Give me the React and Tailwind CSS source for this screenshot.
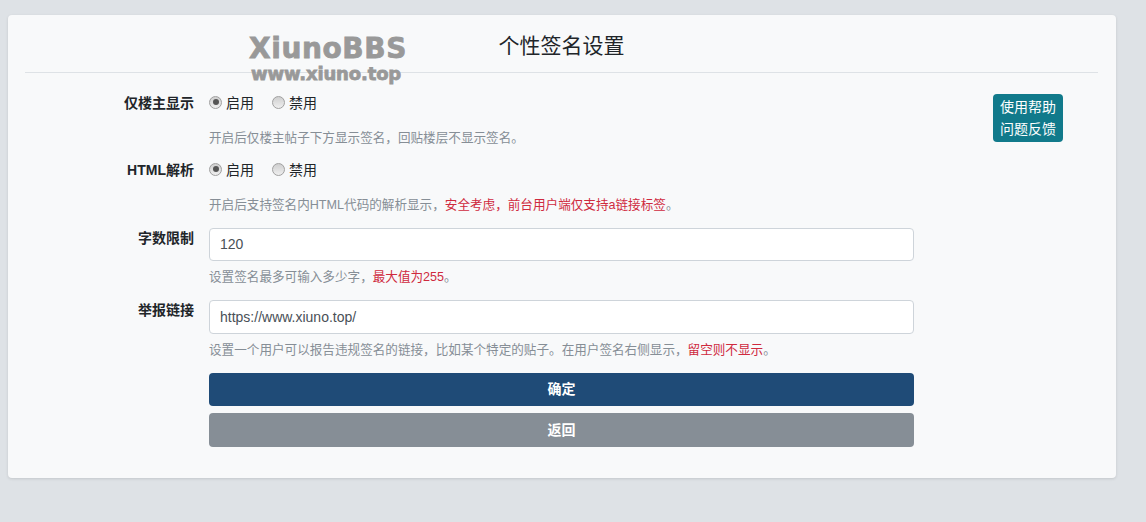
const font = { fontFamily: '"Liberation Sans", "Noto Sans CJK SC", sans-serif' };

const Label = ({ children, className = "" }) => (
  <div className={`w-[169px] shrink-0 text-right text-[14px] font-bold leading-5 text-[#212529] ${className}`}>{children}</div>
);

const Hint = ({ children, className = "" }) => (
  <div className={`text-[12.6px] leading-5 text-[#868e96] ${className}`}>{children}</div>
);

const Radio = ({ checked, children }) => (
  <span className="flex items-center gap-[4px] text-[14px] leading-5 text-[#212529]">
    <span className="flex h-[13px] w-[13px] -translate-y-[1px] items-center justify-center rounded-full border border-[#a0a0a0] bg-gradient-to-b from-[#cfcfcf] to-[#efefef]">
      {checked && <span className="h-[6px] w-[6px] rounded-full bg-[#555]" />}
    </span>
    {children}
  </span>
);

const RadioRow = ({ label }) => (
  <div className="flex items-start gap-[15px]">
    <Label>{label}</Label>
    <div className="flex gap-[18px]">
      <Radio checked>启用</Radio>
      <Radio>禁用</Radio>
    </div>
  </div>
);

const Input = ({ value, className = "" }) => (
  <div className={`flex w-[705px] items-center rounded-[4px] border border-[#ced4da] bg-white px-[10px] text-[14px] text-[#495057] ${className}`}>
    {value}
  </div>
);

export default function App() {
  return (
    <div style={font} className="min-h-[522px] bg-[#dee2e6] pl-[8px] pr-[30px] pt-[15px]">
      <div className="relative h-[463px] rounded-[4px] bg-[#f8f9fa] pl-[17px] pr-[18px] shadow-[0_1px_3px_rgba(0,0,0,0.12)]">
        <div className="flex h-[58px] items-center justify-center border-b border-[#dee2e6] pt-[4px] text-[21px] text-[#212529]">
          个性签名设置
        </div>

        {/* watermark sits over the header rule */}
        <div className="pointer-events-none absolute left-[241px] top-[16px] font-['DejaVu_Sans'] font-bold text-[#999] [-webkit-text-stroke:0.8px_#999]">
          <div className="text-[28px] leading-[36px] tracking-[0.6px]">XiunoBBS</div>
          <div className="-mt-[4px] pl-[2px] text-[18px] leading-[22px] tracking-[-0.15px]">www.xiuno.top</div>
        </div>

        <div className="absolute left-[985px] top-[79px] rounded-[4px] bg-[#117a8b] px-[7px] py-[2px] text-center text-[14px] leading-[22px] text-white">
          使用帮助<br />问题反馈
        </div>

        <div className="pt-[20px]">
          <RadioRow label="仅楼主显示" />
          <div className="mt-[15px] flex gap-[15px]">
            <div className="w-[169px]" />
            <Hint>开启后仅楼主帖子下方显示签名，回贴楼层不显示签名。</Hint>
          </div>

          <div className="mt-[12px]">
            <RadioRow label="HTML解析" />
          </div>
          <div className="mt-[15px] flex gap-[15px]">
            <div className="w-[169px]" />
            <Hint>
              开启后支持签名内HTML代码的解析显示，<span className="text-[#cf2a3e]">安全考虑，前台用户端仅支持a链接标签</span>。
            </Hint>
          </div>

          <div className="mt-[13px] flex items-start gap-[15px]">
            <Label>字数限制</Label>
            <Input value="120" className="h-[33px]" />
          </div>
          <div className="mt-[6px] flex gap-[15px]">
            <div className="w-[169px]" />
            <Hint>设置签名最多可输入多少字，<span className="text-[#cf2a3e]">最大值为255</span>。</Hint>
          </div>

          <div className="mt-[13px] flex items-start gap-[15px]">
            <Label>举报链接</Label>
            <Input value="https://www.xiuno.top/" className="h-[34px]" />
          </div>
          <div className="mt-[6px] flex gap-[15px]">
            <div className="w-[169px]" />
            <Hint>
              设置一个用户可以报告违规签名的链接，比如某个特定的贴子。在用户签名右侧显示，<span className="text-[#cf2a3e]">留空则不显示</span>。
            </Hint>
          </div>

          <div className="ml-[184px] mt-[13px] flex w-[705px] flex-col gap-[7px]">
            <div className="flex h-[33px] items-center justify-center rounded-[4px] bg-[#1f4b77] text-[14px] font-bold text-white">确定</div>
            <div className="flex h-[34px] items-center justify-center rounded-[4px] bg-[#868e96] text-[14px] font-bold text-white">返回</div>
          </div>
        </div>
      </div>
    </div>
  );
}
